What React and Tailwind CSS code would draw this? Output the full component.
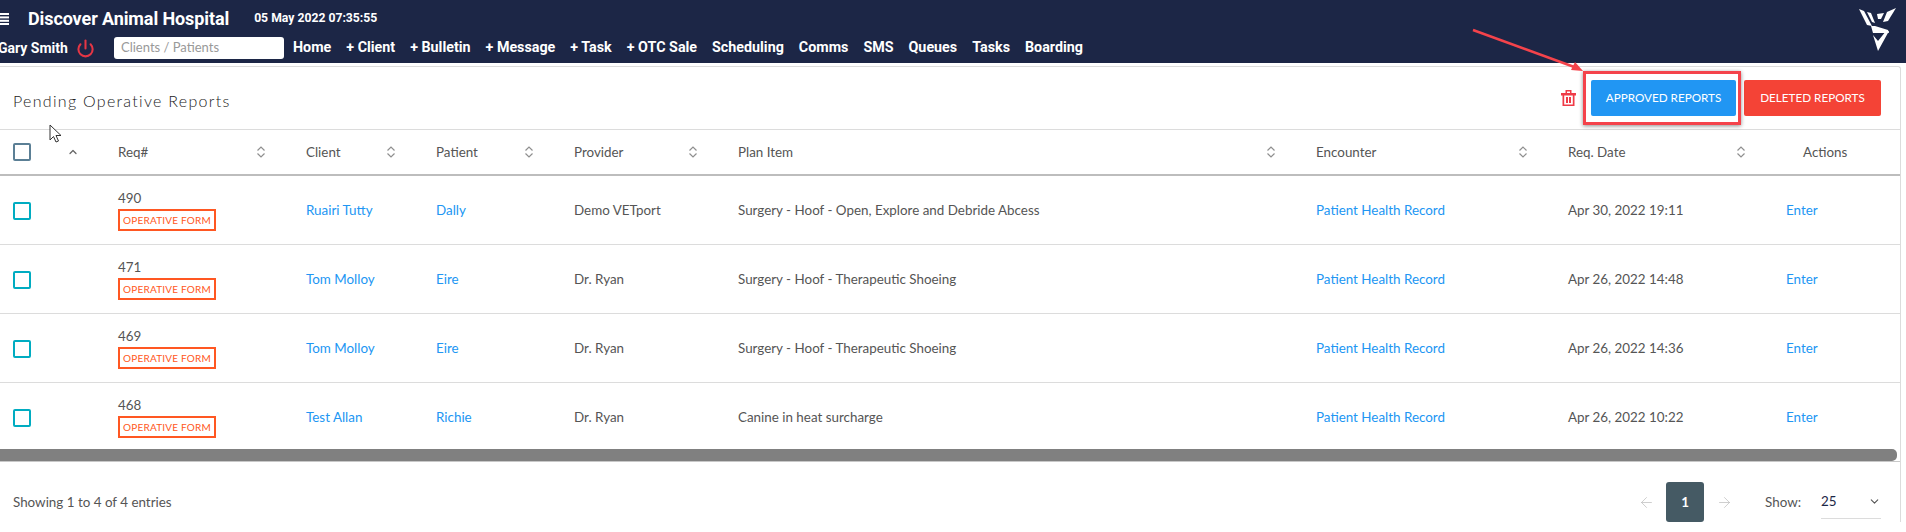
import { ChevronUp, ChevronDown, Power, ArrowLeft, ArrowRight } from 'lucide-react';

const COLS = 'grid grid-cols-[105px_188px_130px_138px_164px_578px_252px_218px_127px]';

const columns = ['Req#', 'Client', 'Patient', 'Provider', 'Plan Item', 'Encounter', 'Req. Date'];

const rows = [
  { id: 490, client: 'Ruairi Tutty', patient: 'Dally', provider: 'Demo VETport', plan: 'Surgery - Hoof - Open, Explore and Debride Abcess', date: 'Apr 30, 2022 19:11' },
  { id: 471, client: 'Tom Molloy', patient: 'Eire', provider: 'Dr. Ryan', plan: 'Surgery - Hoof - Therapeutic Shoeing', date: 'Apr 26, 2022 14:48' },
  { id: 469, client: 'Tom Molloy', patient: 'Eire', provider: 'Dr. Ryan', plan: 'Surgery - Hoof - Therapeutic Shoeing', date: 'Apr 26, 2022 14:36' },
  { id: 468, client: 'Test Allan', patient: 'Richie', provider: 'Dr. Ryan', plan: 'Canine in heat surcharge', date: 'Apr 26, 2022 10:22' },
];

const navItems = ['Home', '+ Client', '+ Bulletin', '+ Message', '+ Task', '+ OTC Sale', 'Scheduling', 'Comms', 'SMS', 'Queues', 'Tasks', 'Boarding'];

function SortIcon() {
  return (
    <svg width="10" height="12" viewBox="0 0 10 12" fill="none" stroke="#8f8f8f" strokeWidth="1.2">
      <path d="M1.5 4.5 L5 1 L8.5 4.5" />
      <path d="M1.5 7.5 L5 11 L8.5 7.5" />
    </svg>
  );
}

function Hamburger() {
  return (
    <svg width="9" height="12" viewBox="0 0 9 12" fill="white" className="shrink-0">
      <rect y="0" width="9" height="2" />
      <rect y="3.4" width="9" height="2" />
      <rect y="6.8" width="9" height="2" />
      <rect y="10" width="9" height="2" />
    </svg>
  );
}

function TrashIcon() {
  return (
    <svg width="15" height="16" viewBox="0 0 15 16" fill="#ef3b47">
      <path d="M4.5 0 H10.5 V3 H15 V5.5 H13.5 V16 H1.5 V5.5 H0 V3 H4.5 Z M6 1.5 V3 H9 V1.5 Z M3.2 5.5 V14.4 H11.8 V5.5 Z" fillRule="evenodd" />
      <rect x="5" y="7" width="2" height="6" />
      <rect x="8" y="7" width="2" height="6" />
    </svg>
  );
}

function Logo() {
  return (
    <svg width="56" height="60" viewBox="0 0 56 60" fill="white">
      <polygon points="9,9 14,11 22,26 17,25" />
      <polygon points="17,12 21,13 25,23 22,22" />
      <polygon points="27,14 34,13 31,19 28,19" />
      <polygon points="37,12 46,8 38,21 33,22" />
      <polygon points="21,26 25,26 38,30 39,33 23,33" />
      <polygon points="23,35 28,41 36,31 39,31 28,51" />
    </svg>
  );
}

function TopBar() {
  return (
    <div className="h-[63px] bg-[#1c2646] text-white flex justify-between overflow-hidden font-['Roboto',sans-serif]">
      <div>
        <div className="flex items-center h-[37px]">
          <Hamburger />
          <span className="ml-[19px] text-[18px] font-bold leading-none tracking-[-0.1px]">Discover Animal Hospital</span>
          <span className="ml-[25px] text-[12.2px] font-bold leading-none">05 May 2022 07:35:55</span>
        </div>
        <div className="flex items-center">
          <span className="-ml-[2px] text-[14px] font-bold w-[70px] whitespace-nowrap">Gary Smith</span>
          <Power size={19} strokeWidth={2.6} className="text-[#e53645] ml-[8px]" />
          <div className="ml-[19px] w-[170px] h-[22px] bg-white rounded-[3px] flex items-center px-[7px] text-[13px] text-[#999] font-['Lato',sans-serif]">Clients / Patients</div>
          <div className="ml-[9px] flex gap-[15px] text-[14.3px] font-bold whitespace-nowrap">
            {navItems.map((item) => (
              <span key={item}>{item}</span>
            ))}
          </div>
        </div>
      </div>
      <Logo />
    </div>
  );
}

function HeaderRow() {
  return (
    <div className={`${COLS} h-[46px] border-b-2 border-[#bdbdbd] items-center text-[13.4px] text-[#555]`}>
      <div className="flex items-center pl-[13px]">
        <span className="w-[18px] h-[18px] border-2 border-[#5b7f95] rounded-[2px]" />
        <ChevronUp size={12} strokeWidth={2.5} className="ml-[36px] text-[#666]" />
      </div>
      {columns.map((label) => (
        <div key={label} className="flex items-center justify-between pl-[13px] pr-[27px]">
          <span>{label}</span>
          <SortIcon />
        </div>
      ))}
      <div className="pl-[30px]">Actions</div>
    </div>
  );
}

function Row({ row, last }) {
  return (
    <div className={`${COLS} overflow-hidden text-[13.4px] text-[#555] ${last ? 'h-[66px]' : 'h-[69px] border-b border-[#dcdcdc]'}`}>
      <div className="h-[68px] flex items-center pl-[13px] pt-[1px]">
        <span className="w-[18px] h-[18px] border-2 border-[#00acc1] rounded-[2px]" />
      </div>
      <div className="h-[68px] flex flex-col justify-center pl-[13px] pt-[1px] items-start">
        <span className="leading-[17px]">{row.id}</span>
        <span className="mt-[2px] w-[98px] h-[22px] border-2 border-[#ff5722] text-[#ff5722] text-[10px] flex items-center justify-center tracking-[0.2px] whitespace-nowrap">OPERATIVE FORM</span>
      </div>
      <div className="h-[68px] flex items-center pl-[13px] text-[#2196f3]">{row.client}</div>
      <div className="h-[68px] flex items-center pl-[13px] text-[#2196f3]">{row.patient}</div>
      <div className="h-[68px] flex items-center pl-[13px]">{row.provider}</div>
      <div className="h-[68px] flex items-center pl-[13px]">{row.plan}</div>
      <div className="h-[68px] flex items-center pl-[13px] text-[#2196f3]">Patient Health Record</div>
      <div className="h-[68px] flex items-center pl-[13px]">{row.date}</div>
      <div className="h-[68px] flex items-center pl-[13px] text-[#2196f3]">Enter</div>
    </div>
  );
}

function Footer() {
  return (
    <div className="border-t border-[#c8c8c8] pt-[20px] pl-[13px] pr-[19px] flex justify-between items-center text-[13.4px] text-[#555]">
      <span>Showing 1 to 4 of 4 entries</span>
      <div className="flex items-center">
        <ArrowLeft size={17} strokeWidth={1} className="text-[#bbb]" />
        <span className="ml-[11px] w-[38px] h-[40px] rounded-[3px] bg-[#455a64] text-white font-bold flex items-center justify-center">1</span>
        <ArrowRight size={17} strokeWidth={1} className="ml-[12px] text-[#bbb]" />
        <span className="ml-[32px]">Show:</span>
        <div className="ml-[20px] w-[60px] h-[34px] border-b border-[#dcdcdc] flex items-center justify-between text-[#1c2646]">
          <span>25</span>
          <ChevronDown size={13} className="text-[#555]" />
        </div>
      </div>
    </div>
  );
}

export default function App() {
  return (
    <div className="relative w-[1906px] h-[532px] overflow-hidden bg-white font-['Lato',sans-serif]">
      <TopBar />
      <div className="w-[1901px] mt-[3px] border-t border-r border-[#dcdcdc] rounded-tr-[3px]">
        <div className="h-[63px] border-b border-[#dcdcdc] flex items-center justify-between pl-[13px] pr-[19px]">
          <h1 className="mt-[6px] text-[16px] font-light tracking-[1.3px] text-[#222]">Pending Operative Reports</h1>
          <div className="flex items-center">
            <TrashIcon />
            <button className="ml-[15px] w-[145px] h-[36px] rounded-[2px] bg-[#2196f3] text-white text-[11.7px]">APPROVED REPORTS</button>
            <button className="ml-[8px] w-[137px] h-[36px] rounded-[2px] bg-[#f44336] text-white text-[11.7px]">DELETED REPORTS</button>
          </div>
        </div>
        <HeaderRow />
        {rows.map((row, i) => (
          <Row key={row.id} row={row} last={i === rows.length - 1} />
        ))}
        <div className="w-[1897px] h-[12px] bg-[#808080] rounded-r-[5px]" />
        <Footer />
      </div>

      {/* annotation on top of the screenshot */}
      <div className="absolute left-[1583px] top-[71px] w-[158px] h-[54px] border-[3px] border-[#f4434b] shadow-[0_1px_4px_rgba(0,0,0,0.45)]" />
      <svg className="absolute left-[1465px] top-[24px]" width="125" height="52" viewBox="0 0 125 52">
        <line x1="8" y1="6" x2="112" y2="44" stroke="#f4434b" strokeWidth="2.5" />
        <polygon points="118,47 106,46 110,38" fill="#f4434b" />
      </svg>
      <svg className="absolute left-[49px] top-[124px]" width="14" height="22" viewBox="0 0 14 22">
        <path d="M1 1 L1 16 L4.5 12.5 L7 18 L9.5 17 L7 11.5 L12 11.5 Z" fill="white" stroke="#333" strokeWidth="1" />
      </svg>
    </div>
  );
}
